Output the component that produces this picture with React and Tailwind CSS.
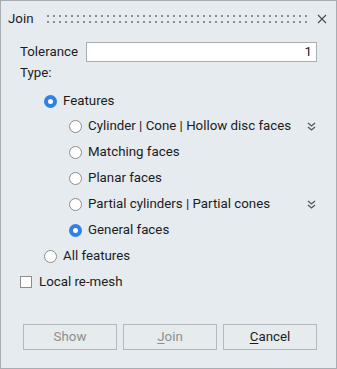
import React from 'react';

const Radio = ({ checked }) => (
  checked ? (
    <span className="w-[13px] h-[13px] rounded-full bg-[#2f80e8] flex items-center justify-center shrink-0">
      <span className="w-[5px] h-[5px] rounded-full bg-white" />
    </span>
  ) : (
    <span className="w-[13px] h-[13px] rounded-full bg-white border border-[#8c8c8c] shrink-0" />
  )
);

const Chevrons = () => (
  <svg width="9" height="9" viewBox="0 0 9 9" className="text-[#555]">
    <path d="M1 1 L4.5 4 L8 1 M1 5 L4.5 8 L8 5" fill="none" stroke="currentColor" strokeWidth="1.3" />
  </svg>
);

const Option = ({ label, checked, more, indent }) => (
  <div className={`h-[26px] flex items-center ${indent ? 'pl-[49px]' : 'pl-[24px]'}`}>
    <Radio checked={checked} />
    <span className="ml-[6px]">{label}</span>
    {more && (
      <span className="ml-auto mr-[1px] flex items-center">
        <Chevrons />
      </span>
    )}
  </div>
);

export default function App() {
  const dots = Array.from({ length: 44 });

  return (
    <div className="w-[337px] h-[369px] border border-[#a7adb2] bg-[#e5ebef] flex flex-col font-['Roboto',sans-serif] text-[13.3px] text-[#1c1c1c]">
      {/* title bar */}
      <div className="h-[35px] flex items-center pl-[7px] pr-[9px]">
        <span className="w-[39px]">Join</span>
        <div className="flex flex-col gap-[4px]">
          {[0, 1].map((r) => (
            <div key={r} className="flex gap-[4px]">
              {dots.map((_, i) => (
                <span key={i} className="w-[2px] h-[2px] bg-[#8a8e92]" />
              ))}
            </div>
          ))}
        </div>
        <span className="ml-auto flex items-center">
          <svg width="10" height="10" viewBox="0 0 10 10">
            <path d="M1 1 L9 9 M9 1 L1 9" stroke="#4a4a4a" strokeWidth="1.1" />
          </svg>
        </span>
      </div>

      <div className="px-[19px]">
        <div className="mt-[6px] h-[20px] flex items-center">
          <span className="w-[66px]">Tolerance</span>
          <div className="h-[20px] w-[232px] bg-white border border-[#a9aeb3] flex items-center justify-end pr-[4px]">
            1
          </div>
        </div>
        <div className="h-[22px] flex items-center">Type:</div>
        <div className="mt-[4px]">
          <Option label="Features" checked />
        </div>
        <div className="-mt-[1px]">
          <Option indent more label="Cylinder | Cone | Hollow disc faces" />
          <Option indent label="Matching faces" />
          <Option indent label="Planar faces" />
          <Option indent more label="Partial cylinders | Partial cones" />
          <Option indent checked label="General faces" />
          <Option label="All features" />
        </div>
        <div className="h-[26px] flex items-center">
          <span className="w-[12px] h-[12px] bg-white border border-[#8c8c8c]" />
          <span className="ml-[7px]">Local re-mesh</span>
        </div>
      </div>

      <div className="mt-auto mb-[18px] pl-[22px] flex gap-[6px]">
        <button className="w-[94px] h-[26px] border border-[#b4b9bd] bg-[#e6ebee] text-[#8e8e8e]">Show</button>
        <button className="w-[94px] h-[26px] border border-[#b4b9bd] bg-[#e6ebee] text-[#8e8e8e]">
          <span className="underline underline-offset-2">J</span>oin
        </button>
        <button className="w-[94px] h-[26px] border border-[#b4b9bd] bg-[#e6ebee] text-[#1c1c1c]">
          <span className="underline underline-offset-2">C</span>ancel
        </button>
      </div>
    </div>
  );
}
